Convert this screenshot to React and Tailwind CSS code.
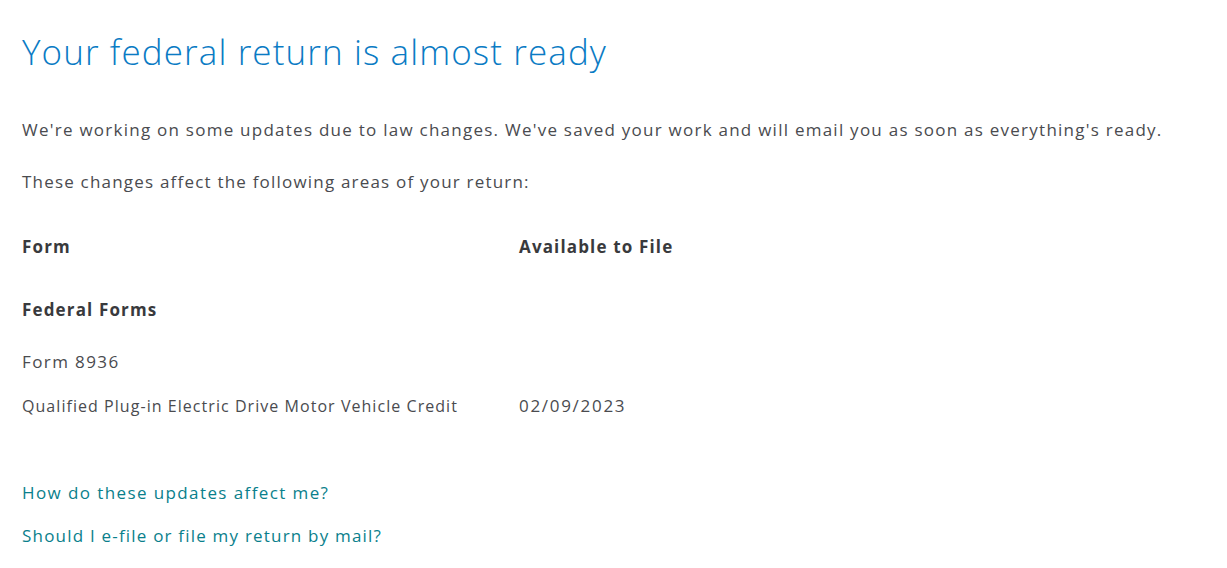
import React from "react";

const rows = [
  { form: "Qualified Plug-in Electric Drive Motor Vehicle Credit", date: "02/09/2023" },
];

export default function App() {
  return (
    <div
      className="min-h-screen bg-white px-[22px] pt-[30px] text-[#4a4b4f]"
      style={{ fontFamily: "'Open Sans', 'Noto Sans', sans-serif" }}
    >
      <h1 className="text-[35px] leading-[44px] font-light tracking-[1.1px] text-[#0a7bc4]">
        Your federal return is almost ready
      </h1>
      <p className="mt-[44px] text-[17px] leading-[24px] tracking-[1.25px]">
        We're working on some updates due to law changes. We've saved your work and will email you as soon as everything's ready.
      </p>
      <p className="mt-[28px] text-[17px] leading-[24px] tracking-[1.2px]">
        These changes affect the following areas of your return:
      </p>

      <div className="mt-[41px] grid grid-cols-[497px_1fr] text-[17px] leading-[24px] font-bold tracking-[1.15px] text-[#393a3d]">
        <div>Form</div>
        <div>Available to File</div>
      </div>
      <div className="mt-[39px] text-[17px] leading-[24px] font-bold tracking-[1.15px] text-[#393a3d]">
        Federal Forms
      </div>
      <div className="mt-[28px] text-[17px] leading-[24px] tracking-[1.4px]">Form 8936</div>
      {rows.map((r) => (
        <div key={r.form} className="mt-[20px] grid grid-cols-[497px_1fr] leading-[24px]">
          <div className="text-[16px] tracking-[1.05px]">{r.form}</div>
          <div className="text-[17px] tracking-[1.7px]">{r.date}</div>
        </div>
      ))}

      <div className="mt-[63px] flex flex-col gap-[19px] text-[17px] leading-[24px] font-medium tracking-[1.2px] text-[#0a7f8c]">
        <a href="#" className="tracking-[1.4px]">How do these updates affect me?</a>
        <a href="#">Should I e-file or file my return by mail?</a>
      </div>
    </div>
  );
}
